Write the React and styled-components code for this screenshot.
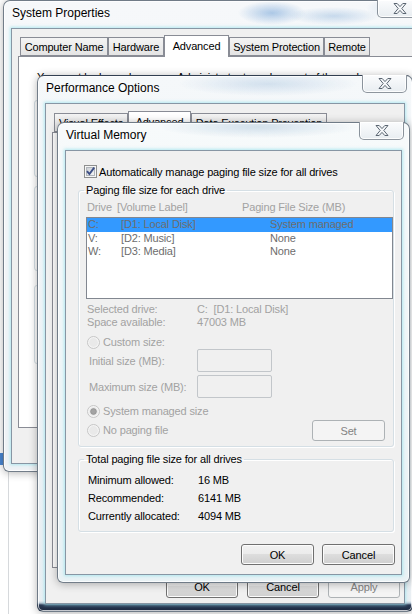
import React from "react";
import styled, { createGlobalStyle, css } from "styled-components";

const GlobalStyle = createGlobalStyle`
  html, body {
    margin: 0;
    padding: 0;
    background: #ffffff;
  }
`;

const glass = {
  sys: `radial-gradient(ellipse 34px 12px at 268px 12px, rgba(80, 140, 205, 0.45), transparent),
    radial-gradient(ellipse 46px 9px at 330px 15px, rgba(110, 160, 210, 0.35), transparent),
    radial-gradient(ellipse 30px 10px at 392px 7px, rgba(130, 170, 215, 0.3), transparent),
    linear-gradient(180deg, #f6f8fa, #eef2f5)`,
  perf: `linear-gradient(0deg, #1c2940 0, #2a3a55 6px, #b8c9d6 8px, transparent 10px),
    radial-gradient(ellipse 90px 12px at 230px 8px, rgba(130, 170, 210, 0.3), transparent),
    linear-gradient(180deg, #f5f8fa, #e9eff3)`,
  vm: `radial-gradient(ellipse 100px 11px at 200px 4px, rgba(140, 175, 205, 0.35), transparent),
    linear-gradient(180deg, #f7fafb, #e9f2f5)`,
};

const Desktop = styled.div`
  position: relative;
  width: 412px;
  height: 614px;
  overflow: hidden;
  background: #ffffff;
  font-family: "Liberation Sans", Arial, sans-serif;
  font-size: 11px;
  letter-spacing: -0.15px;
  color: #000;
`;

const BackWindow = styled.div`
  position: absolute;
  left: -40px;
  top: 440px;
  width: 49px;
  height: 200px;
  box-sizing: border-box;
  padding-top: 13px;
  background: #fff;
  border-right: 1px solid #d6d9dc;
`;

const BlueSliver = styled.div`
  width: 3px;
  height: 12px;
  margin-left: 40px;
  background: #4a88d4;
`;

const Window = styled.div`
  position: absolute;
  left: ${(p) => p.$x}px;
  top: ${(p) => p.$y}px;
  width: ${(p) => p.$w}px;
  height: ${(p) => p.$h}px;
  z-index: ${(p) => p.$z};
  box-sizing: border-box;
  display: flex;
  flex-direction: column;
  padding: 0 7px 7px;
  border: 1px solid rgba(58, 72, 88, 0.7);
  border-radius: 7px 7px 6px 6px;
  background: ${(p) => p.$bg};
  box-shadow: 0 1px 8px rgba(0, 0, 0, 0.3), inset 0 0 0 1px rgba(255, 255, 255, 0.75);
`;

const TitleBar = styled.div`
  flex: none;
  height: 27px;
  display: flex;
  justify-content: space-between;
  align-items: flex-start;
`;

const Title = styled.span`
  padding: 4px 0 0 1px;
  font-size: 12px;
  line-height: 16px;
  letter-spacing: 0;
  color: #000;
  text-shadow: 0 0 6px #fff, 0 0 10px #fff;
`;

const CloseBox = styled.div`
  width: 45px;
  height: 18px;
  margin: -1px -2px 0 0;
  box-sizing: border-box;
  display: flex;
  align-items: center;
  justify-content: center;
  border: 1px solid rgba(70, 82, 96, 0.6);
  border-top: none;
  border-radius: 0 0 5px 5px;
  background: linear-gradient(180deg, #fbfcfd, #e8edf1);
  box-shadow: inset 0 0 0 1px rgba(255, 255, 255, 0.85);
`;

const CloseButton = () => (
  <CloseBox>
    <svg width="14" height="11" viewBox="0 0 14 11">
      <polygon
        points="1,0.5 4.2,0.5 7,3.6 9.8,0.5 13,0.5 8.8,5.5 13,10.5 9.8,10.5 7,7.4 4.2,10.5 1,10.5 5.2,5.5"
        fill="#f5f7f9"
        stroke="#5b6672"
        strokeWidth="1"
        strokeLinejoin="round"
      />
    </svg>
  </CloseBox>
);

const Client = styled.div`
  flex: 1;
  min-height: 0;
  display: flex;
  flex-direction: column;
  padding: ${(p) => p.$pad};
  background: #f0f0f0;
  border: 1px solid #8796a4;
  box-shadow: 0 0 3px 1px rgba(150, 225, 235, 0.7);
  overflow: hidden;
`;

/* ---------- tabs ---------- */

const TabStrip = styled.div`
  flex: none;
  height: 21px;
  display: flex;
  align-items: flex-end;
  padding-left: 2px;
  position: relative;
  z-index: 1;
`;

const Tab = styled.div`
  box-sizing: border-box;
  flex: none;
  width: ${(p) => p.$w}px;
  height: 19px;
  display: flex;
  align-items: center;
  justify-content: center;
  white-space: nowrap;
  border: 1px solid #898c95;
  background: linear-gradient(180deg, #f4f4f4, #e4e4e4);
  ${(p) =>
    p.$active &&
    css`
      height: 22px;
      margin-bottom: -1px;
      padding-bottom: 2px;
      border-bottom: none;
      background: #fff;
    `}
`;

const TabPanel = styled.div`
  flex: 1;
  min-height: 0;
  border: 1px solid #898c95;
  background: #fff;
  padding: ${(p) => p.$pad || "0"};
  display: flex;
  flex-direction: column;
`;

/* ---------- buttons ---------- */

const ButtonRow = styled.div`
  flex: none;
  display: flex;
  justify-content: flex-end;
  gap: ${(p) => p.$gap}px;
  margin: ${(p) => p.$m};
`;

const Button = styled.button`
  box-sizing: border-box;
  width: ${(p) => p.$w || 73}px;
  height: ${(p) => p.$h || 21}px;
  padding: 0;
  font: inherit;
  letter-spacing: inherit;
  color: #000;
  border: 1px solid #707070;
  border-radius: 3px;
  background: linear-gradient(180deg, #f2f2f2 0%, #ebebeb 48%, #dddddd 50%, #cfcfcf 100%);
  box-shadow: inset 0 0 0 1px #fcfcfc;
  ${(p) =>
    p.disabled &&
    css`
      color: #838383;
      border-color: #adb2b5;
      background: #f4f4f4;
      box-shadow: none;
    `}
`;

/* ---------- system properties panel ---------- */

const Note = styled.p`
  margin: 13px 0 0 3px;
  line-height: 14px;
  white-space: nowrap;
`;

const OldGroup = styled.div`
  box-sizing: border-box;
  flex: none;
  height: ${(p) => p.$h}px;
  margin-top: ${(p) => p.$mt}px;
  border: 1px solid #d5dfe5;
  border-radius: 3px;
  box-shadow: inset 1px 1px 0 #fff;
`;

/* ---------- virtual memory ---------- */

const CheckRow = styled.label`
  display: flex;
  align-items: center;
  gap: 2px;
  height: 13px;
  margin-left: 6px;
  white-space: nowrap;
`;

const GroupBox = styled.fieldset`
  margin: ${(p) => p.$mt}px 0 0;
  padding: 0 0 ${(p) => p.$pb}px 7px;
  min-width: 0;
  border: 1px solid #d5dfe5;
  border-radius: 3px;
  box-shadow: inset 1px 1px 0 #fff, 1px 1px 0 #fff;
`;

const GroupLegend = styled.legend`
  padding: 0 2px;
  margin-left: -2px;
  line-height: 14px;
  white-space: nowrap;
`;

const ColumnHeader = styled.div`
  display: flex;
  height: 14px;
  line-height: 14px;
  margin-top: 3px;
  padding-left: 1px;
  color: #a2a2a2;
  white-space: nowrap;
`;

const Cell = styled.span`
  flex: none;
  width: ${(p) => (p.$w ? `${p.$w}px` : "auto")};
`;

const ListBox = styled.div`
  box-sizing: border-box;
  height: 82px;
  margin-top: 3px;
  border: 1px solid #828790;
  background: #fff;
`;

const ListRow = styled.div`
  display: flex;
  height: 13.5px;
  line-height: 13.5px;
  padding-left: 1px;
  color: #6d6d6d;
  white-space: nowrap;
  background: ${(p) => (p.$selected ? "#3399ff" : "transparent")};
`;

const InfoRow = styled.div`
  display: flex;
  height: 13px;
  line-height: 13px;
  margin-top: ${(p) => p.$mt}px;
  padding-left: 1px;
  color: #a2a2a2;
  white-space: nowrap;
`;

const RadioRow = styled.div`
  display: flex;
  align-items: center;
  gap: 3px;
  min-height: 13px;
  margin-top: ${(p) => p.$mt}px;
  padding-left: 1px;
  padding-right: 8px;
  color: ${(p) => (p.$dim ? "#a2a2a2" : "#000")};
  white-space: nowrap;
`;

const RadioLabel = styled.span`
  line-height: 13px;
`;

const SetSlot = styled.div`
  margin-left: auto;
  display: flex;
`;

const SizeRow = styled.div`
  display: flex;
  align-items: center;
  margin-top: ${(p) => p.$mt}px;
  padding-left: 3px;
  color: #a2a2a2;
  white-space: nowrap;
`;

const SizeLabel = styled.span`
  flex: none;
  width: 108px;
`;

const SizeInput = styled.div`
  box-sizing: border-box;
  width: 75px;
  height: 23px;
  border: 1px solid #c2c6ca;
  border-radius: 2px;
  background: #f0f0f0;
`;

const TotalsList = styled.div`
  margin-top: 5px;
  padding-left: 2px;
`;

const TotalsRow = styled.div`
  display: flex;
  height: 18px;
  line-height: 18px;
  white-space: nowrap;
`;

/* ---------- drawings ---------- */

const CheckBox = () => (
  <svg width="13" height="13" viewBox="0 0 13 13">
    <defs>
      <linearGradient id="cbFill" x1="0" y1="0" x2="1" y2="1">
        <stop offset="0" stopColor="#c9cdd3" />
        <stop offset="1" stopColor="#f7f7f7" />
      </linearGradient>
    </defs>
    <rect x="0.5" y="0.5" width="12" height="12" fill="#f6f6f6" stroke="#8e8f8f" />
    <rect x="2.5" y="2.5" width="8" height="8" fill="url(#cbFill)" stroke="#b0b5bb" />
    <path d="M3 6.2 L5.4 9 L10.2 2.6" fill="none" stroke="#3d4f86" strokeWidth="1.9" />
  </svg>
);

const Radio = ({ checked }) => (
  <svg width="13" height="13" viewBox="0 0 13 13" style={{ flex: "none" }}>
    <circle cx="6.5" cy="6.5" r="6" fill="#f4f4f4" stroke="#c6c6c6" />
    <circle cx="6.5" cy="6.5" r="4.4" fill="#e9e9e9" />
    {checked && <circle cx="6.5" cy="6.5" r="2.9" fill="#a3a3a3" stroke="#8c8c8c" strokeWidth="0.7" />}
  </svg>
);

const drives = [
  { letter: "C:", label: "[D1: Local Disk]", size: "System managed", selected: true },
  { letter: "V:", label: "[D2: Music]", size: "None" },
  { letter: "W:", label: "[D3: Media]", size: "None" },
];

const totals = [
  ["Minimum allowed:", "16 MB"],
  ["Recommended:", "6141 MB"],
  ["Currently allocated:", "4094 MB"],
];

const App = () => {
  return (
    <>
      <GlobalStyle />
      <Desktop>
        <BackWindow>
          <BlueSliver />
        </BackWindow>

        <Window $x={3} $y={0} $w={425} $h={472} $z={1} $bg={glass.sys}>
          <TitleBar>
            <Title>System Properties</Title>
            <CloseButton />
          </TitleBar>
          <Client $pad="6px 4px 35px 6px">
            <TabStrip>
              <Tab $w={88}>Computer Name</Tab>
              <Tab $w={56}>Hardware</Tab>
              <Tab $w={65} $active>
                Advanced
              </Tab>
              <Tab $w={95}>System Protection</Tab>
              <Tab $w={46}>Remote</Tab>
            </TabStrip>
            <TabPanel $pad="0 8px 0 15px">
              <Note>You must be logged on as an Administrator to make most of these changes.</Note>
              <OldGroup $mt={16} $h={77} />
              <OldGroup $mt={9} $h={85} />
              <OldGroup $mt={14} $h={79} />
            </TabPanel>
          </Client>
        </Window>

        <Window $x={37} $y={75} $w={376} $h={537} $z={2} $bg={glass.perf}>
          <TitleBar>
            <Title>Performance Options</Title>
            <CloseButton />
          </TitleBar>
          <Client $pad="7px 4px 5px 6px">
            <TabStrip>
              <Tab $w={74}>Visual Effects</Tab>
              <Tab $w={63} $active>
                Advanced
              </Tab>
              <Tab $w={136}>Data Execution Prevention</Tab>
            </TabStrip>
            <TabPanel />
            <ButtonRow $gap={9} $m="7px 0 0 0">
              <Button $w={72} $h={23}>
                OK
              </Button>
              <Button $w={72} $h={23}>
                Cancel
              </Button>
              <Button $w={72} $h={23} disabled>
                Apply
              </Button>
            </ButtonRow>
          </Client>
        </Window>

        <Window $x={57} $y={122} $w={353} $h={461} $z={3} $bg={glass.vm}>
          <TitleBar>
            <Title>Virtual Memory</Title>
            <CloseButton />
          </TitleBar>
          <Client $pad="14px 7px 0 12px">
            <CheckRow>
              <CheckBox />
              <span>Automatically manage paging file size for all drives</span>
            </CheckRow>

            <GroupBox $mt={5} $pb={5}>
              <GroupLegend>Paging file size for each drive</GroupLegend>
              <ColumnHeader>
                <Cell $w={30}>Drive</Cell>
                <Cell $w={125}>[Volume Label]</Cell>
                <Cell>Paging File Size (MB)</Cell>
              </ColumnHeader>
              <ListBox>
                {drives.map((d) => (
                  <ListRow key={d.letter} $selected={d.selected}>
                    <Cell $w={33}>{d.letter}</Cell>
                    <Cell $w={149}>{d.label}</Cell>
                    <Cell>{d.size}</Cell>
                  </ListRow>
                ))}
              </ListBox>
              <InfoRow $mt={4}>
                <Cell $w={110}>Selected drive:</Cell>
                <Cell>C:&nbsp; [D1: Local Disk]</Cell>
              </InfoRow>
              <InfoRow $mt={0}>
                <Cell $w={110}>Space available:</Cell>
                <Cell>47003 MB</Cell>
              </InfoRow>
              <RadioRow $mt={7} $dim>
                <Radio />
                <RadioLabel>Custom size:</RadioLabel>
              </RadioRow>
              <SizeRow $mt={0}>
                <SizeLabel>Initial size (MB):</SizeLabel>
                <SizeInput />
              </SizeRow>
              <SizeRow $mt={3}>
                <SizeLabel>Maximum size (MB):</SizeLabel>
                <SizeInput />
              </SizeRow>
              <RadioRow $mt={7} $dim>
                <Radio checked />
                <RadioLabel>System managed size</RadioLabel>
              </RadioRow>
              <RadioRow $mt={2} $dim>
                <Radio />
                <RadioLabel>No paging file</RadioLabel>
                <SetSlot>
                  <Button disabled>Set</Button>
                </SetSlot>
              </RadioRow>
            </GroupBox>

            <GroupBox $mt={5} $pb={6}>
              <GroupLegend>Total paging file size for all drives</GroupLegend>
              <TotalsList>
                {totals.map(([label, value]) => (
                  <TotalsRow key={label}>
                    <Cell $w={110}>{label}</Cell>
                    <Cell>{value}</Cell>
                  </TotalsRow>
                ))}
              </TotalsList>
            </GroupBox>

            <ButtonRow $gap={8} $m="12px -1px 0 0">
              <Button>OK</Button>
              <Button>Cancel</Button>
            </ButtonRow>
          </Client>
        </Window>
      </Desktop>
    </>
  );
};

export default App;
